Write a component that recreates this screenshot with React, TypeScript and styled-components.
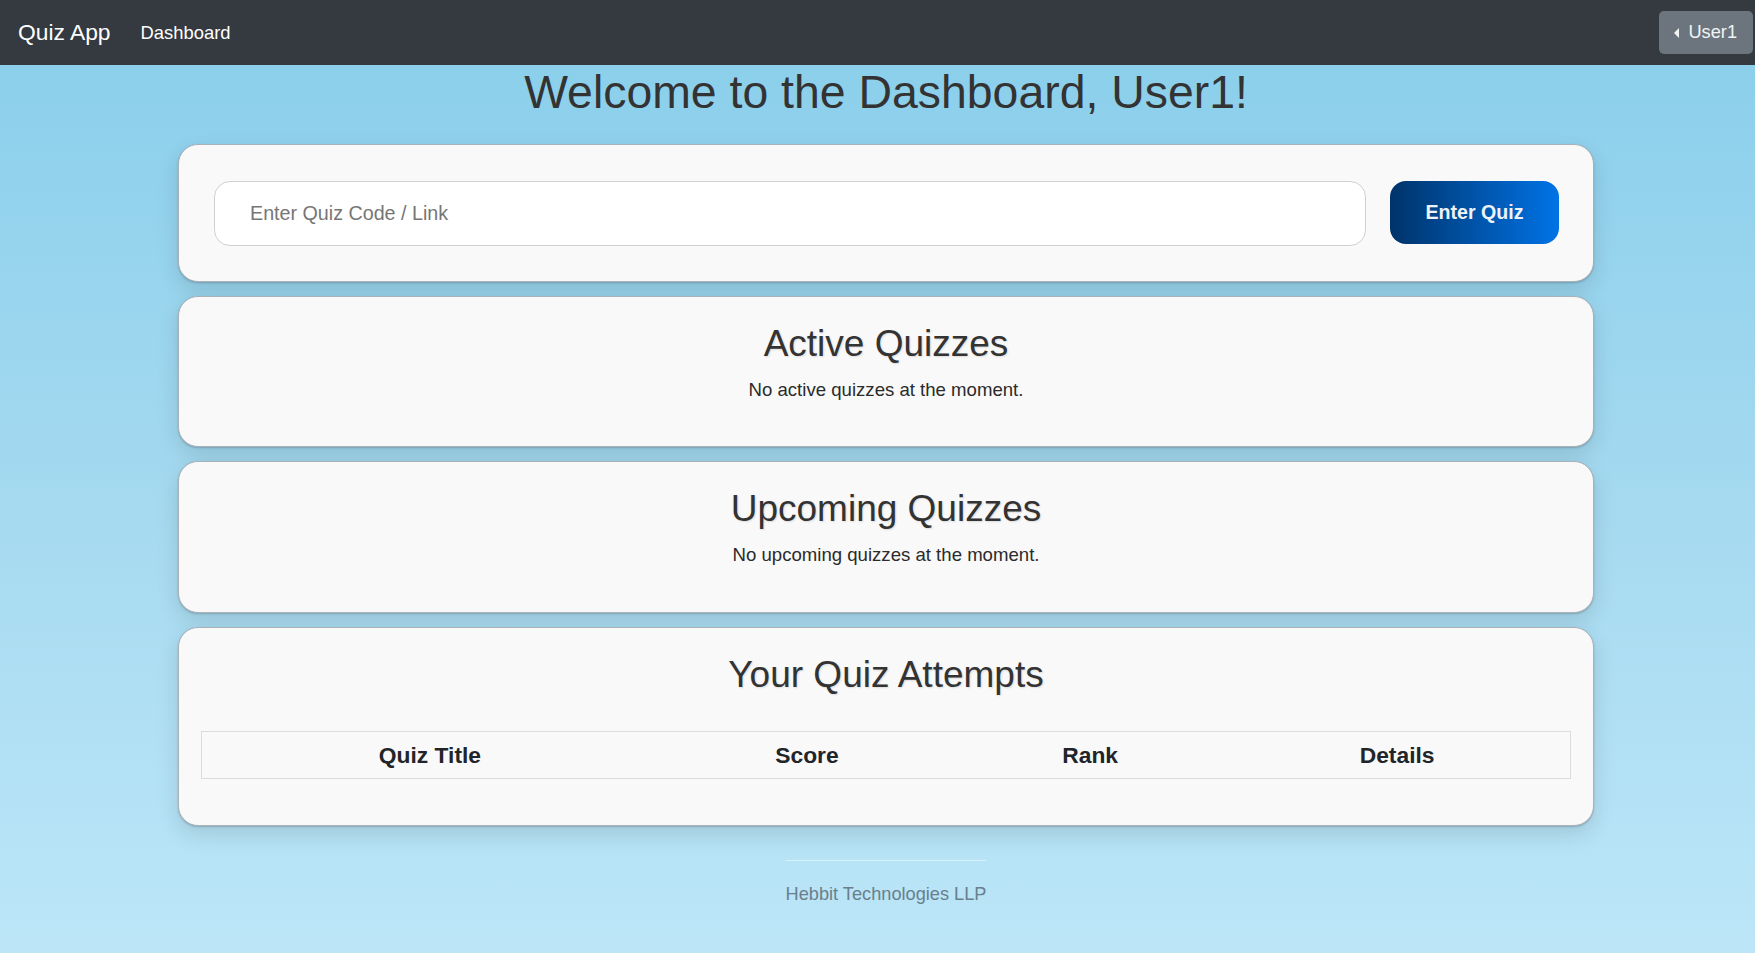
import React from "react";
import styled, { createGlobalStyle } from "styled-components";

const GlobalStyle = createGlobalStyle`
  html, body {
    margin: 0;
    padding: 0;
  }
  body {
    font-family: "Liberation Sans", Arial, Helvetica, sans-serif;
    min-height: 953px;
    background: linear-gradient(to bottom, #88ceeb 0%, #a6daf0 55%, #bce6f8 100%);
    color: #212529;
  }
  * { box-sizing: border-box; }
`;

const Page = styled.div`
  min-height: 953px;
  display: flex;
  flex-direction: column;
`;

const NavBar = styled.nav`
  height: 65px;
  background: #343a40;
  display: flex;
  align-items: center;
  padding: 0 2px 0 18px;
`;

const Brand = styled.a`
  font-size: 22.8px;
  color: #fff;
  text-decoration: none;
  margin-right: 30px;
`;

const NavLink = styled.a`
  font-size: 18.4px;
  color: #fff;
  text-decoration: none;
  margin-top: 1px;
`;

const Spacer = styled.div`
  flex: 1;
`;

const UserButton = styled.button`
  height: 43px;
  display: flex;
  align-items: center;
  gap: 9px;
  padding: 0 16px 0 15px;
  border: none;
  border-radius: 5px;
  background: #6c757d;
  color: #f1f3f5;
  font-family: inherit;
  font-size: 18.2px;
`;

const Caret = styled.span`
  width: 0;
  height: 0;
  border-top: 5px solid transparent;
  border-bottom: 5px solid transparent;
  border-right: 5.5px solid #f1f3f5;
`;

const Main = styled.main`
  padding-left: 17px;
  display: flex;
  flex-direction: column;
  align-items: center;
`;

const Title = styled.h1`
  margin: 0 0 23px;
  font-size: 46.4px;
  font-weight: 400;
  line-height: 1.2;
  color: #333;
`;

const CardStack = styled.div`
  width: 1416px;
  display: flex;
  flex-direction: column;
  gap: 14px;
`;

const Card = styled.section<{ $pad: string }>`
  background: #f9f9f9;
  border: 1px solid #a9b1b9;
  border-radius: 20px;
  box-shadow: 0 1px 2px rgba(0, 0, 0, 0.18), 0 8px 22px rgba(0, 0, 0, 0.12);
  padding: ${(p) => p.$pad};
  text-align: center;
`;

const EntryRow = styled.form`
  display: flex;
  align-items: center;
  gap: 24px;
`;

const CodeInput = styled.input`
  flex: 1;
  height: 65px;
  margin-top: 1px;
  border: 1px solid #d0d0d0;
  border-radius: 16px;
  background: #fff;
  padding: 0 35px;
  font-family: inherit;
  font-size: 19.7px;
  color: #333;
  outline: none;
  &::placeholder {
    color: #767676;
  }
`;

const EnterButton = styled.button`
  width: 169px;
  height: 63px;
  border: none;
  border-radius: 16px;
  background: linear-gradient(to right, #00336a, #0073e6);
  color: #eef3fa;
  font-family: inherit;
  font-size: 19.6px;
  font-weight: 700;
  padding-bottom: 2px;
`;

const SectionTitle = styled.h2`
  margin: 0 0 10px;
  font-size: 37px;
  font-weight: 400;
  line-height: 1.2;
  color: #333;
  text-shadow: 1px 1px 2px rgba(0, 0, 0, 0.12);
`;

const EmptyText = styled.p`
  margin: 0 0 18px;
  font-size: 18.6px;
  line-height: 1.5;
  color: #2b2b2b;
`;

const Table = styled.table`
  width: 100%;
  margin: 33px 0 23px;
  border-collapse: collapse;
  border: 1px solid #dcdcdc;
`;

const Col = styled.col<{ $w: number }>`
  width: ${(p) => p.$w}px;
`;

const HeadCell = styled.th`
  padding: 6px 8px;
  font-size: 22.8px;
  font-weight: 700;
  line-height: 1.5;
  color: #212529;
  text-align: center;
`;

const Footer = styled.footer`
  margin-top: 34px;
  padding-top: 20px;
  border-top: 1px solid rgba(255, 255, 255, 0.45);
  font-size: 18.2px;
  line-height: 1.5;
  color: #6a7f8c;
`;

const columns = [
  { label: "Quiz Title", w: 456 },
  { label: "Score", w: 298 },
  { label: "Rank", w: 268 },
  { label: "Details", w: 346 },
];

export default function App() {
  return (
    <Page>
      <GlobalStyle />
      <NavBar>
        <Brand href="#">Quiz App</Brand>
        <NavLink href="#">Dashboard</NavLink>
        <Spacer />
        <UserButton type="button">
          <Caret />
          User1
        </UserButton>
      </NavBar>
      <Main>
        <Title>Welcome to the Dashboard, User1!</Title>
        <CardStack>
          <Card $pad="35px 34px 35px 35px">
            <EntryRow onSubmit={(e) => e.preventDefault()}>
              <CodeInput placeholder="Enter Quiz Code / Link" />
              <EnterButton type="submit">Enter Quiz</EnterButton>
            </EntryRow>
          </Card>
          <Card $pad="25px 23px 24px">
            <SectionTitle>Active Quizzes</SectionTitle>
            <EmptyText>No active quizzes at the moment.</EmptyText>
          </Card>
          <Card $pad="25px 23px 25px">
            <SectionTitle>Upcoming Quizzes</SectionTitle>
            <EmptyText>No upcoming quizzes at the moment.</EmptyText>
          </Card>
          <Card $pad="25px 22px 23px">
            <SectionTitle>Your Quiz Attempts</SectionTitle>
            <Table>
              <colgroup>
                {columns.map((c) => (
                  <Col key={c.label} $w={c.w} />
                ))}
              </colgroup>
              <thead>
                <tr>
                  {columns.map((c) => (
                    <HeadCell key={c.label}>{c.label}</HeadCell>
                  ))}
                </tr>
              </thead>
              <tbody></tbody>
            </Table>
          </Card>
        </CardStack>
        <Footer>Hebbit Technologies LLP</Footer>
      </Main>
    </Page>
  );
}
